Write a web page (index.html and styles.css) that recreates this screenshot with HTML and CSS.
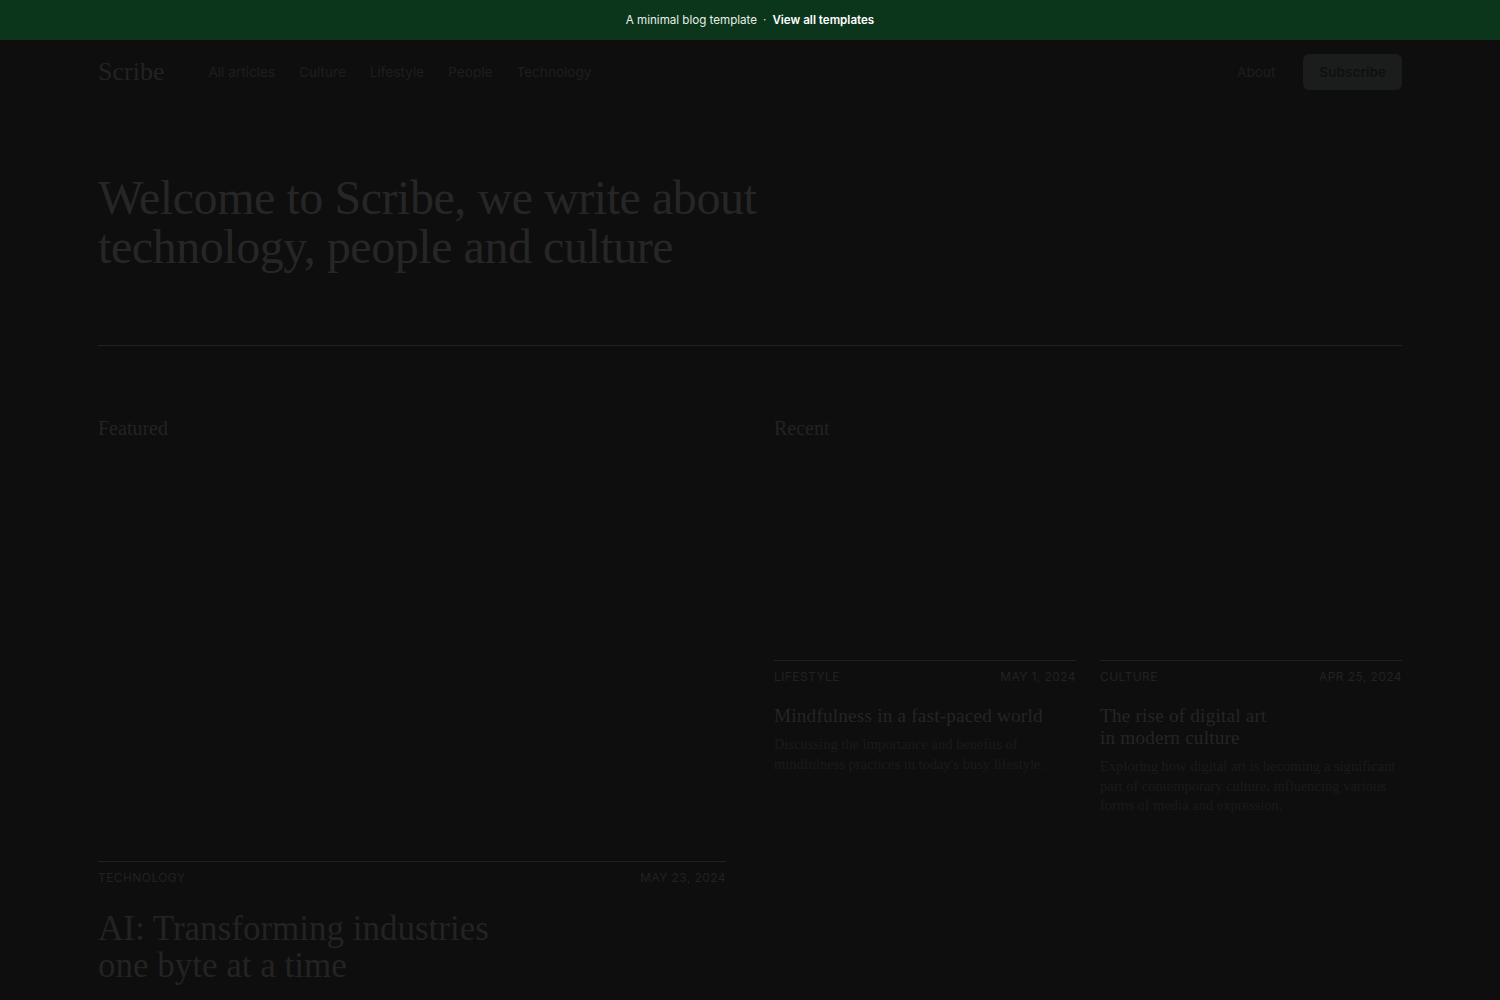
FILE: index.html
```html
<!DOCTYPE html>
<html lang="en">
<head>
<meta charset="utf-8">
<title>Scribe</title>
<link rel="stylesheet" href="styles.css">
</head>
<body>
<div class="banner">
  <span>A minimal blog template</span>
  <span class="dot">·</span>
  <a class="banner-link" href="#">View all templates</a>
</div>
<header class="header">
  <div class="container header-row">
    <div class="header-left">
      <a class="logo" href="#">Scribe</a>
      <nav class="nav">
        <a href="#">All articles</a>
        <a href="#">Culture</a>
        <a href="#">Lifestyle</a>
        <a href="#">People</a>
        <a href="#">Technology</a>
      </nav>
    </div>
    <div class="header-right">
      <a class="about" href="#">About</a>
      <a class="subscribe" href="#">Subscribe</a>
    </div>
  </div>
</header>
<main class="container">
  <section class="hero">
    <h1>Welcome to Scribe, we write about<br>technology, people and culture</h1>
  </section>
  <hr class="divider">
  <section class="columns">
    <div class="col">
      <h2 class="section-title">Featured</h2>
      <article class="post featured">
        <div class="thumb thumb-lg"></div>
        <div class="meta"><span>Technology</span><span>May 23, 2024</span></div>
        <h3 class="post-title-lg">AI: Transforming industries<br>one byte at a time</h3>
      </article>
    </div>
    <div class="col">
      <h2 class="section-title">Recent</h2>
      <div class="recent-grid">
        <article class="post">
          <div class="thumb thumb-sm"></div>
          <div class="meta"><span>Lifestyle</span><span>May 1, 2024</span></div>
          <h3 class="post-title">Mindfulness in a fast-paced world</h3>
          <p class="post-desc">Discussing the importance and benefits of mindfulness practices in today's busy lifestyle.</p>
        </article>
        <article class="post">
          <div class="thumb thumb-sm"></div>
          <div class="meta"><span>Culture</span><span>Apr 25, 2024</span></div>
          <h3 class="post-title">The rise of digital art<br>in modern culture</h3>
          <p class="post-desc">Exploring how digital art is becoming a significant part of contemporary culture, influencing various forms of media and expression.</p>
        </article>
      </div>
    </div>
  </section>
</main>
</body>
</html>
```

FILE: styles.css
```css
* { box-sizing: border-box; }
html, body { margin: 0; padding: 0; }
body {
  background: #0e0e0e;
  color: #242424;
  font-family: "Liberation Serif", "Times New Roman", serif;
  height: 1000px;
  overflow: hidden;
}
a { text-decoration: none; color: inherit; }

.banner {
  height: 40px;
  background: #0b361b;
  color: #e8efe9;
  font-family: Inter, "Liberation Sans", sans-serif;
  font-size: 11.6px;
  display: flex;
  align-items: center;
  justify-content: center;
  gap: 6px;
}
.banner .dot { color: #cfd8d1; }
.banner-link { color: #ffffff; font-weight: 600; }

.container {
  width: 1304px;
  margin: 0 auto;
}

.header { padding: 14px 0 13px; }
.header-row {
  display: flex;
  align-items: center;
  justify-content: space-between;
  height: 36px;
}
.header-left { display: flex; align-items: center; gap: 44px; }
.logo {
  font-family: "Liberation Serif", serif;
  font-size: 26px;
  color: #222322;
  line-height: 1;
}
.nav { display: flex; gap: 24px; font-family: Inter, "Liberation Sans", sans-serif; font-size: 13.6px; color: #1e1e1e; }
.header-right { display: flex; align-items: center; gap: 28px; }
.about { font-family: Inter, "Liberation Sans", sans-serif; font-size: 13.6px; color: #1e1e1e; }
.subscribe {
  height: 36px;
  padding: 0 16px;
  display: flex;
  align-items: center;
  background: #1a1d1b;
  border-radius: 6px;
  font-family: Inter, "Liberation Sans", sans-serif;
  font-size: 13.6px;
  font-weight: 600;
  color: #0f100f;
}

.hero { padding-top: 70px; }
.hero h1 {
  margin: 0;
  font-weight: 400;
  font-size: 48px;
  line-height: 49px;
  letter-spacing: -0.45px;
  color: #262626;
}

.divider {
  border: 0;
  border-top: 1px solid #222222;
  margin: 74px 0 0;
}

.columns {
  display: grid;
  grid-template-columns: 628px 628px;
  column-gap: 48px;
  padding-top: 68px;
}
.section-title {
  margin: 0;
  font-weight: 400;
  font-size: 20px;
  line-height: 28px;
  color: #232323;
}
.thumb { margin-top: 24px; }
.thumb-lg { height: 395px; }
.thumb-sm { height: 194px; }

.recent-grid {
  display: grid;
  grid-template-columns: 302px 302px;
  column-gap: 24px;
}

.meta {
  border-top: 1px solid #202020;
  padding-top: 7px;
  display: flex;
  justify-content: space-between;
  font-family: Inter, "Liberation Sans", sans-serif;
  font-size: 12px;
  line-height: 17px;
  letter-spacing: 0.035em;
  text-transform: uppercase;
  color: #222222;
}

.post-title {
  margin: 20px 0 0;
  font-weight: 400;
  font-size: 19.2px;
  line-height: 22px;
  letter-spacing: 0.2px;
  color: #252525;
}
.post-title-lg {
  margin: 24px 0 0;
  font-weight: 400;
  font-size: 35px;
  line-height: 37px;
  letter-spacing: 0;
  color: #232323;
}
.post-desc {
  margin: 8px 0 0;
  font-size: 14.5px;
  line-height: 19.5px;
  color: #1b1b1b;
}
```
